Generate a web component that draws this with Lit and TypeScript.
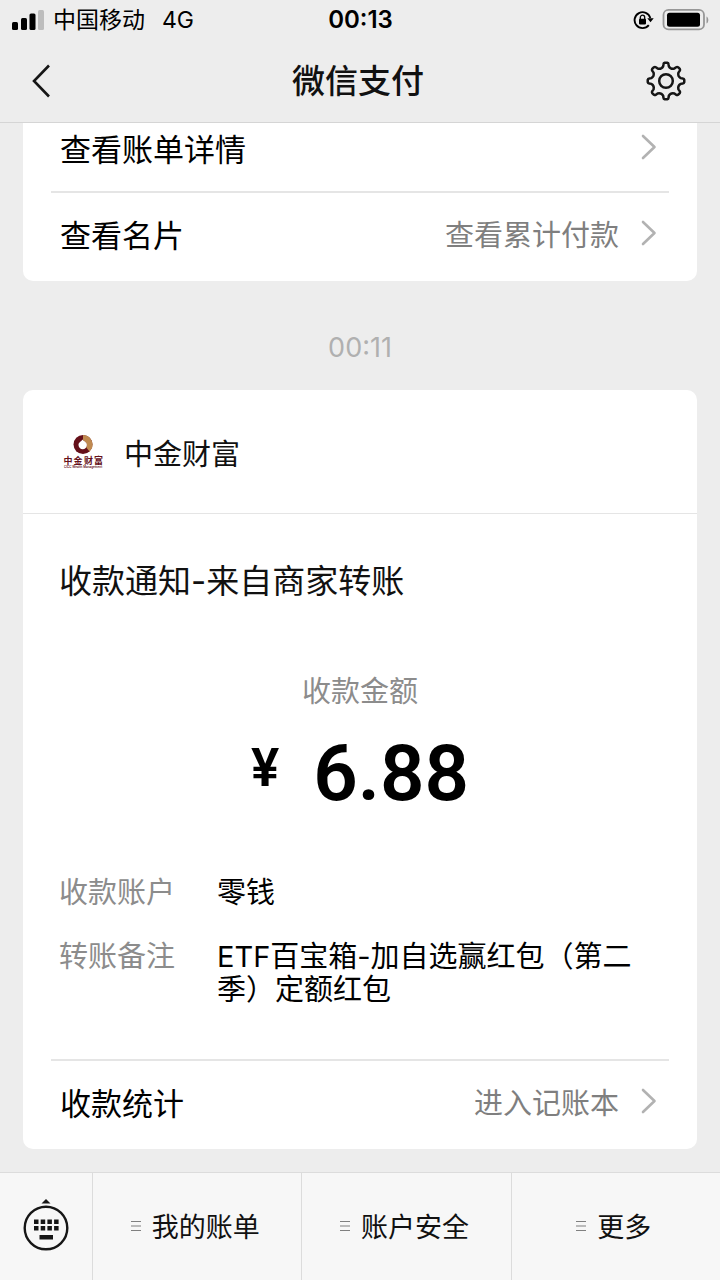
import { LitElement, html, css, svg } from "lit";
import { customElement } from "lit/decorators.js";

const point = (radius: number, degrees: number) => {
  const a = (degrees * Math.PI) / 180;
  return `${(20 + radius * Math.sin(a)).toFixed(2)} ${(20 - radius * Math.cos(a)).toFixed(2)}`;
};

// Outline of an eight-toothed cog, one tooth per 45 degrees.
const gearPath = () => {
  let d = "";
  for (let i = 0; i < 8; i++) {
    const a = i * 45;
    d += `${i === 0 ? "M" : "L"}${point(15, a - 11)}`;
    d += `L${point(17, a - 8.5)}Q${point(18.2, a - 7.5)} ${point(18.3, a - 4)}`;
    d += `L${point(18.3, a + 4)}Q${point(18.2, a + 7.5)} ${point(17, a + 8.5)}`;
    d += `L${point(15, a + 11)}Q${point(12.4, a + 22.5)} ${point(15, a + 34)}`;
  }
  return d + "Z";
};

const chevron = html`<svg class="chevron" width="16" height="26" viewBox="0 0 16 26" aria-hidden="true">
  <path d="M2 2 13.500 13 2 24" fill="none" stroke="#b2b2b2" stroke-width="2.600" stroke-linecap="round" stroke-linejoin="round" />
</svg>`;

@customElement("app-root")
export class AppRoot extends LitElement {
  static styles = css`
    :host {
      display: flex;
      flex-direction: column;
      height: 100vh;
      background: #ededed;
      color: #111;
      font-family: Inter, "Noto Sans CJK SC", sans-serif;
    }
    * {
      box-sizing: border-box;
    }
    svg {
      display: block;
      flex: none;
    }
    button {
      border: 0;
      padding: 0;
      background: none;
      color: inherit;
      font: inherit;
      cursor: pointer;
    }
    a {
      color: inherit;
      text-decoration: none;
    }
    h1, h2, p, dl, dd, dt {
      margin: 0;
      font-weight: 400;
    }
    .top {
      flex: none;
      border-bottom: 1px solid #d5d5d5;
    }
    .status {
      display: grid;
      grid-template-columns: 1fr auto 1fr;
      align-items: center;
      height: 40px;
      padding: 0 11px 0 12px;
      font-size: 23px;
      line-height: 40px;
      color: #000;
    }
    .carrier {
      display: flex;
      align-items: center;
      gap: 8px;
    }
    .network {
      margin-left: 9px;
    }
    .clock {
      font-size: 24px;
      font-weight: 600;
    }
    .indicators {
      display: flex;
      align-items: center;
      justify-content: flex-end;
      gap: 8px;
    }
    .nav {
      display: grid;
      grid-template-columns: 1fr auto 1fr;
      align-items: center;
      height: 82px;
      padding: 0 34px 0 30px;
    }
    .title {
      font-size: 33px;
      line-height: 40px;
      font-weight: 500;
    }
    .settings {
      justify-self: end;
    }
    .chat {
      flex: 1;
      min-height: 0;
      overflow: hidden;
      padding: 0 23px;
    }
    .card {
      background: #fff;
      border-radius: 10px;
      padding-bottom: 4px;
    }
    .scrolled {
      margin-top: -16px;
    }
    .row {
      display: flex;
      align-items: center;
      margin: 0 28px;
      padding: 0 12px 4px 9px;
      height: 84px;
      font-size: 31px;
      color: #000;
    }
    .line {
      margin: 0 28px;
      height: 2px;
      background: #e5e5e5;
    }
    .hint {
      margin-left: auto;
      font-size: 29px;
      color: #7f7f7f;
    }
    .chevron {
      margin-left: 22px;
    }
    .row > .chevron:nth-child(2) {
      margin-left: auto;
    }
    .time {
      display: block;
      height: 109px;
      padding-top: 47px;
      text-align: center;
      font-size: 27px;
      line-height: 40px;
      color: #b0b0b0;
    }
    .merchant {
      display: flex;
      align-items: center;
      gap: 20px;
      height: 124px;
      padding: 0 37px 0 40px;
      border-bottom: 1px solid #e5e5e5;
      font-size: 29px;
    }
    .body {
      padding: 47px 36px 53px;
    }
    .subject {
      font-size: 33px;
      line-height: 40px;
    }
    .caption {
      margin-top: 74px;
      text-align: center;
      font-size: 29px;
      line-height: 34px;
      color: #8c8c8c;
    }
    .amount {
      display: flex;
      justify-content: center;
      align-items: flex-start;
      gap: 34px;
      margin-top: 25px;
      font-family: Roboto, sans-serif;
      font-weight: 600;
      font-size: 78px;
      line-height: 80px;
      color: #000;
    }
    .currency {
      font-size: 53px;
      line-height: 68px;
    }
    .facts {
      display: grid;
      grid-template-columns: 158px 1fr;
      row-gap: 31px;
      margin-top: 62px;
      font-size: 29px;
      line-height: 33px;
      color: #000;
    }
    .facts dt {
      color: #8c8c8c;
    }
    .menu {
      flex: none;
      display: flex;
      height: 108px;
      background: #f7f7f7;
      border-top: 1px solid #dcdcdc;
    }
    .keyboard {
      display: flex;
      align-items: center;
      justify-content: center;
      width: 92px;
      padding-bottom: 3px;
    }
    .entry {
      flex: 1;
      display: flex;
      align-items: center;
      justify-content: center;
      gap: 11px;
      padding: 0 4px 2px 0;
      border-left: 1px solid #dcdcdc;
      font-size: 27px;
    }
  `;

  private entry(label: string) {
    return html`<button class="entry">
      <svg width="10" height="12" viewBox="0 0 10 12" aria-hidden="true">
        <path d="M0 1.500h10M0 6h10M0 10.500h10" stroke="#808080" stroke-width="1.200" />
      </svg>
      <span>${label}</span>
    </button>`;
  }

  render() {
    const keys = [0, 1, 2, 3].map(
      (i) => svg`<path d="M${11 + i * 6.7} 20.500h4.500v4.500h-4.500zM${11 + i * 6.7} 27h4.500v4.500h-4.500z" />`
    );
    return html`
      <header class="top">
        <div class="status">
          <div class="carrier">
            <svg width="33" height="22" viewBox="0 0 33 22" aria-label="信号">
              <rect x="0" y="13" width="6" height="8" rx="1.500" />
              <rect x="9" y="9" width="6" height="12" rx="1.500" />
              <rect x="17.500" y="4.500" width="6" height="16.500" rx="1.500" />
              <rect x="26" y="1" width="6" height="20" rx="1.500" fill="#bdbdbd" />
            </svg>
            <span>中国移动</span>
            <span class="network">4G</span>
          </div>
          <span class="clock">00:13</span>
          <div class="indicators">
            <svg width="21" height="20" viewBox="0 0 21 20" aria-label="方向锁定">
              <path d="M17.300 8A8 8 0 1 0 15.800 15.200" fill="none" stroke="#000" stroke-width="1.900" />
              <path d="M14.300 8.200h6.400l-3.200 4z" />
              <rect x="6" y="8.800" width="7" height="5.600" rx="0.800" />
              <path d="M7.300 9V7.400a2.200 2.200 0 0 1 4.400 0V9" fill="none" stroke="#000" stroke-width="1.300" />
            </svg>
            <svg width="47" height="22" viewBox="0 0 47 22" aria-label="电量">
              <rect x="1.500" y="0.900" width="40.500" height="19.500" rx="5" fill="none" stroke="#979797" stroke-width="1.800" />
              <rect x="5" y="3.800" width="33" height="14" rx="2.500" />
              <path d="M44.500 7.500c2.400 1 2.400 6 0 7z" fill="#979797" />
            </svg>
          </div>
        </div>
        <div class="nav">
          <button class="back" aria-label="返回">
            <svg width="22" height="34" viewBox="0 0 22 34">
              <path d="M19 1.500 4 17 19 32.500" fill="none" stroke="#161616" stroke-width="2.600" />
            </svg>
          </button>
          <h1 class="title">微信支付</h1>
          <button class="settings" aria-label="设置">
            <svg width="40" height="40" viewBox="0 0 40 40" fill="none" stroke="#161616" stroke-width="2.500" stroke-linejoin="round">
              <path d=${gearPath()} />
              <circle cx="20" cy="20" r="6.800" />
            </svg>
          </button>
        </div>
      </header>

      <main class="chat">
        <section class="card scrolled">
          <a class="row" href="#bill"><span>查看账单详情</span>${chevron}</a>
          <div class="line"></div>
          <a class="row" href="#profile"><span>查看名片</span><span class="hint">查看累计付款</span>${chevron}</a>
        </section>

        <time class="time">00:11</time>

        <article class="card">
          <div class="merchant">
            <svg width="41" height="36" viewBox="0 0 41 36" aria-hidden="true">
              <circle cx="20" cy="10.500" r="9.500" fill="#65101a" />
              <path d="M20 1A9.500 9.500 0 0 1 26.500 17.400L23.300 13.500A5 5 0 0 0 20 6.500Z" fill="#c08a50" />
              <path d="M19.500 5.500c0.600 1.800 4.400 2 4.400 5.500a4.200 4.200 0 0 1-8.400 0c0-2.600 2.600-3.400 4-5.500z" fill="#fff" />
              <text x="0.500 10.500 21 31" y="29.500" font-size="9" font-weight="700" fill="#65101a">中金财富</text>
              <text x="1" y="33.500" font-size="3" font-weight="600" fill="#65101a">CICC Wealth Management</text>
            </svg>
            <span>中金财富</span>
          </div>
          <div class="body">
            <h2 class="subject">收款通知-来自商家转账</h2>
            <p class="caption">收款金额</p>
            <p class="amount"><span class="currency">¥</span><span>6.88</span></p>
            <dl class="facts">
              <dt>收款账户</dt>
              <dd>零钱</dd>
              <dt>转账备注</dt>
              <dd>ETF百宝箱-加自选赢红包（第二季）定额红包</dd>
            </dl>
          </div>
          <div class="line"></div>
          <a class="row" href="#stats"><span>收款统计</span><span class="hint">进入记账本</span>${chevron}</a>
        </article>
      </main>

      <nav class="menu">
        <button class="keyboard" aria-label="切换键盘">
          <svg width="46" height="52" viewBox="0 0 46 52" fill="#161616">
            <path d="M18.500 4.500 23 0l4.500 4.500z" />
            <circle cx="23" cy="29" r="21.300" fill="none" stroke="#161616" stroke-width="2.400" />
            ${keys}
            <path d="M16.500 36h13.500v4.500h-13.500z" />
          </svg>
        </button>
        ${this.entry("我的账单")} ${this.entry("账户安全")} ${this.entry("更多")}
      </nav>
    `;
  }
}
